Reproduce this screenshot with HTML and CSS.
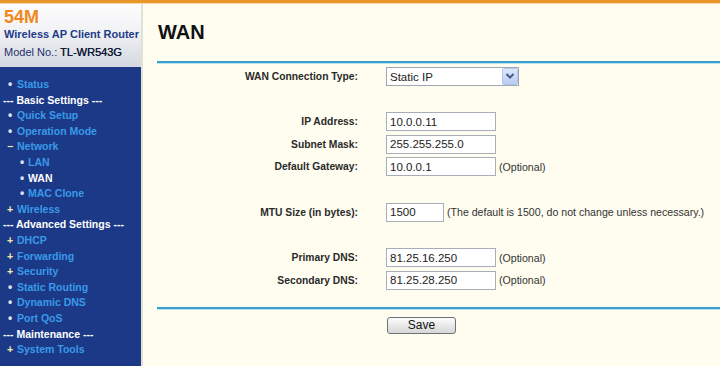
FILE: index.html
```html
<!DOCTYPE html>
<html>
  <head>
    <meta charset="UTF-8" />
    <title>WAN</title>
    <link rel="stylesheet" href="styles.css">
  </head>

  <body>
    <div class="top-bar"></div>
    <div class="frame">
      <div class="side">
        <div class="brand">
          <div class="brand-speed">54M</div>
          <div class="brand-name">Wireless AP Client Router</div>
          <div class="brand-model">Model No.: <b>TL-WR543G</b></div>
        </div>
        <ul class="menu">
          <li class="item"><span class="mark dot">&bull;</span>Status</li>
          <li class="group">--- Basic Settings ---</li>
          <li class="item"><span class="mark dot">&bull;</span>Quick Setup</li>
          <li class="item"><span class="mark dot">&bull;</span>Operation Mode</li>
          <li class="item"><span class="mark plus">&minus;</span>Network</li>
          <li class="item sub"><span class="mark dot">&bull;</span>LAN</li>
          <li class="item sub active"><span class="mark dot">&bull;</span>WAN</li>
          <li class="item sub"><span class="mark dot">&bull;</span>MAC Clone</li>
          <li class="item"><span class="mark plus">+</span>Wireless</li>
          <li class="group">--- Advanced Settings ---</li>
          <li class="item"><span class="mark plus">+</span>DHCP</li>
          <li class="item"><span class="mark plus">+</span>Forwarding</li>
          <li class="item"><span class="mark plus">+</span>Security</li>
          <li class="item"><span class="mark dot">&bull;</span>Static Routing</li>
          <li class="item"><span class="mark dot">&bull;</span>Dynamic DNS</li>
          <li class="item"><span class="mark dot">&bull;</span>Port QoS</li>
          <li class="group">--- Maintenance ---</li>
          <li class="item"><span class="mark plus">+</span>System Tools</li>
        </ul>
      </div>

      <div class="main">
        <h1 class="title">WAN</h1>
        <div class="rule"></div>

        <div class="form">
          <label>WAN Connection Type:</label>
          <div class="field">
            <div class="select">
              <select>
                <option>Static IP</option>
              </select>
              <span class="arrow">
                <svg width="10" height="8" viewBox="0 0 10 8">
                  <path d="M1.5 2 L5 5.5 L8.5 2" fill="none" stroke="#4a5a7e" stroke-width="2" />
                </svg>
              </span>
            </div>
          </div>
          <div class="blank"></div>

          <label>IP Address:</label>
          <div class="field"><input class="ip" type="text" value="10.0.0.11" /></div>
          <label>Subnet Mask:</label>
          <div class="field"><input class="ip" type="text" value="255.255.255.0" /></div>
          <label>Default Gateway:</label>
          <div class="field">
            <input class="ip" type="text" value="10.0.0.1" />
            <span class="note">(Optional)</span>
          </div>
          <div class="blank"></div>

          <label>MTU Size (in bytes):</label>
          <div class="field">
            <input class="mtu" type="text" value="1500" />
            <span class="note">(The default is 1500, do not change unless necessary.)</span>
          </div>
          <div class="blank"></div>

          <label>Primary DNS:</label>
          <div class="field">
            <input class="ip" type="text" value="81.25.16.250" />
            <span class="note">(Optional)</span>
          </div>
          <label>Secondary DNS:</label>
          <div class="field">
            <input class="ip" type="text" value="81.25.28.250" />
            <span class="note">(Optional)</span>
          </div>
        </div>

        <div class="rule rule-bottom"></div>
        <div class="actions">
          <button class="btn" type="button">Save</button>
        </div>
      </div>
    </div>
  </body>
</html>
```

FILE: styles.css
```css
html,
body {
  margin: 0;
  height: 100%;
}

body {
  display: flex;
  flex-direction: column;
  overflow: hidden;
  background: #fffdf0;
  font-family: "Liberation Sans", Arial, sans-serif;
  color: #222;
}

.top-bar {
  height: 3px;
  background: #e8952b;
  box-shadow: 0 1px 0 #f7d9a6;
  position: relative;
  z-index: 1;
}

.frame {
  flex: 1;
  display: flex;
}

/* left menu */
.side {
  width: 141px;
  border-right: 2px solid #e2e1d6;
  background: #1b3987;
  display: flex;
  flex-direction: column;
}

.brand {
  height: 64px;
  box-sizing: border-box;
  padding: 5px 0 0 4px;
  background: linear-gradient(#fdfdfd, #f1f2f4 45%, #d3d7df);
}

.brand-speed {
  font-size: 18px;
  line-height: 19px;
  font-weight: bold;
  color: #f0881d;
}

.brand-name {
  font-size: 11px;
  line-height: 14px;
  font-weight: bold;
  color: #1d3a8a;
}

.brand-model {
  margin-top: 4px;
  font-size: 11px;
  line-height: 14px;
  color: #1e2f6e;
}

.brand-model b {
  font-weight: normal;
  color: #0e1636;
  text-shadow: 0.3px 0 0 #0e1636;
}

.menu {
  list-style: none;
  margin: 0;
  padding: 10px 0 0 0;
  font-size: 10.5px;
  line-height: 15.6px;
  font-weight: bold;
}

.menu .item {
  display: flex;
  padding-left: 3px;
  color: #3a99e8;
}

.menu .sub {
  padding-left: 16px;
}

.menu .sub .mark {
  width: 12px;
}

.menu .active {
  color: #ffffff;
}

.menu .group {
  padding-left: 3px;
  color: #ffffff;
}

.mark {
  width: 14px;
  text-align: center;
}

.mark.dot {
  color: #d9e4f2;
  font-size: 12px;
}

.mark.plus {
  color: #f3ecaa;
}

/* content */
.main {
  flex: 1;
  padding: 17px 0 0 14px;
}

.title {
  margin: 0 0 17px 1px;
  font-size: 20px;
  line-height: 24px;
  font-weight: bold;
  color: #111;
}

.rule {
  height: 2px;
  background: #3a9fcd;
  box-shadow: 0 1px 0 #bde2f1;
}

.rule-bottom {
  margin-top: 15px;
}

.form {
  display: grid;
  grid-template-columns: 201px 1fr;
  column-gap: 28px;
  grid-auto-rows: 22.67px;
  align-items: center;
  padding-top: 2px;
}

.form label {
  text-align: right;
  font-size: 10.3px;
  font-weight: bold;
  color: #2a2a2a;
}

.blank {
  grid-column: 1 / -1;
}

.field {
  display: flex;
  align-items: center;
  gap: 3px;
}

.field input,
.select select {
  box-sizing: border-box;
  height: 19px;
  margin: 0;
  padding: 0 3px;
  border: 1px solid #a7aeb8;
  background: #fff;
  font-family: "Liberation Sans", Arial, sans-serif;
  font-size: 11.5px;
  color: #222;
  outline: none;
}

.ip {
  width: 110px;
}

.mtu {
  width: 58px;
}

.note {
  font-size: 10.6px;
  color: #333;
}

.select {
  position: relative;
  width: 133px;
}

.select select {
  width: 100%;
  appearance: none;
  -webkit-appearance: none;
  border-radius: 0;
  border-color: #9ea6b2;
}

.arrow {
  position: absolute;
  top: 1px;
  right: 1px;
  width: 16px;
  height: 17px;
  box-sizing: border-box;
  border: 1px solid #b3c6ec;
  border-radius: 2px;
  background: linear-gradient(#dce7fb, #b9cdf3);
  display: flex;
  align-items: center;
  justify-content: center;
}

.actions {
  padding: 6px 0 0 230px;
}

.btn {
  width: 69px;
  height: 17px;
  padding: 0;
  border: 1px solid #6e7277;
  border-radius: 3px;
  background: linear-gradient(#fefefe, #e9e9e9 50%, #d6d6d6);
  font-family: "Liberation Sans", Arial, sans-serif;
  font-size: 12px;
  line-height: 15px;
  color: #111;
}
```
